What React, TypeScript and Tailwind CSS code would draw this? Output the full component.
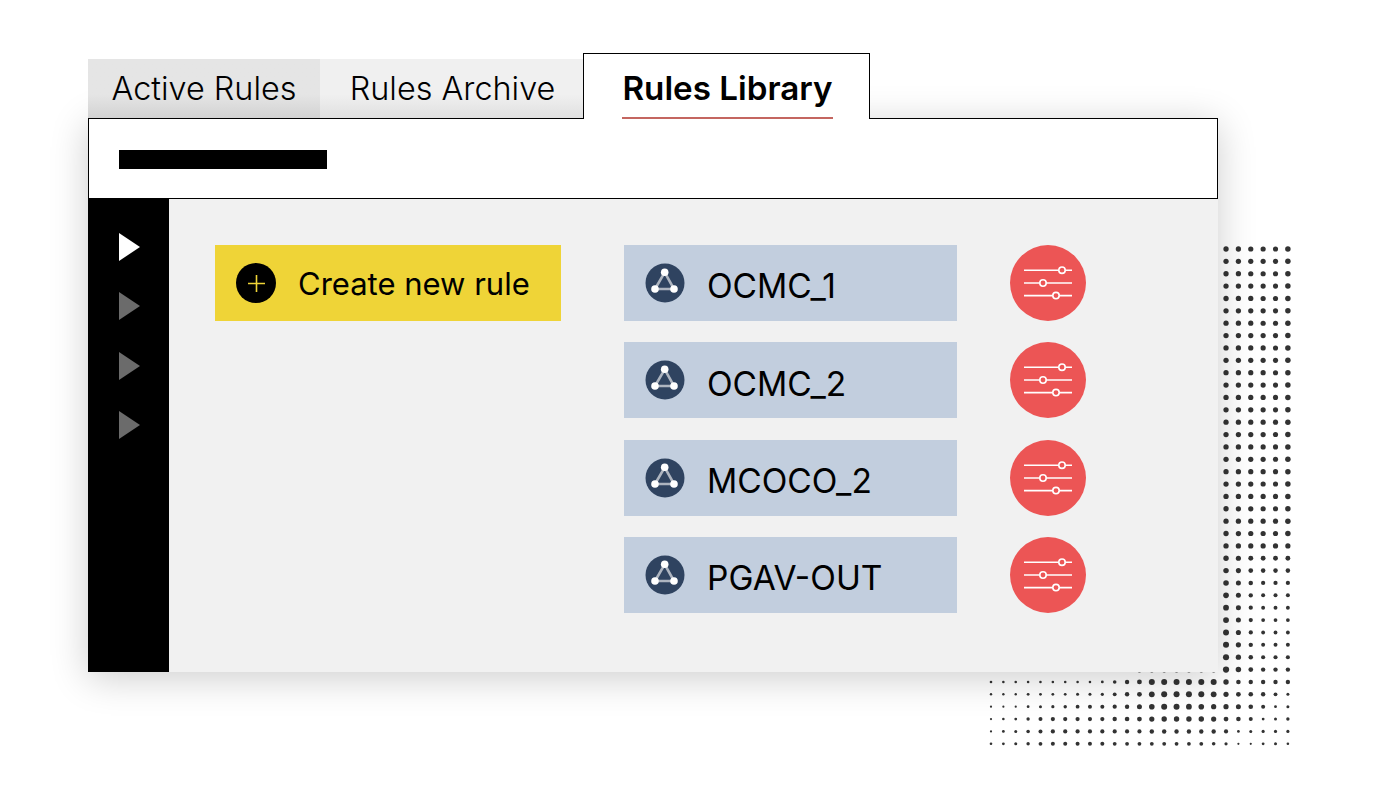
import { useMemo } from "react";

const rules = ["OCMC_1", "OCMC_2", "MCOCO_2", "PGAV-OUT"];

const PITCH = 12.37;

// radius of the six bottom rows, read off the picture
const bottomRows = [
  [1.3, 1.3, 1.3, 1.3, 1.3, 1.3, 1.3, 1.3, 1.3, 1.4, 1.8, 2.2, 2.4, 3, 3, 3, 3, 3, 3, 2.7, 2.3, 2.2, 2.2, 2.2, 2.2],
  [1.2, 1.2, 1.2, 1.4, 1.4, 1.4, 1.4, 1.5, 1.5, 1.6, 1.9, 2.2, 2.4, 2.9, 3, 3, 3, 3, 2.9, 2.6, 2.4, 2.3, 2.2, 1.9, 1.5],
  [1.1, 1.1, 1.1, 1.4, 1.5, 1.6, 1.7, 1.9, 2, 2, 2.1, 2.2, 2.5, 2.8, 3, 3, 2.9, 2.8, 2.6, 2.6, 2.5, 2.3, 2, 1.4, 1.5],
  [1.1, 1.3, 1.4, 1.7, 2, 2.1, 2.1, 2.1, 2.1, 2.1, 2.2, 2.3, 2.4, 2.6, 2.7, 2.7, 2.7, 2.7, 2.6, 2.4, 2.3, 2, 1.4, 1.5, 1.7],
  [1.1, 1.4, 1.5, 1.8, 2, 2.1, 2.1, 2.1, 2.1, 2.1, 2.1, 2.1, 2.1, 2.2, 2.2, 2.2, 2.2, 2.2, 2.2, 2.1, 1.4, 1.5, 1.6, 1.6, 1.6],
  [1.3, 1.4, 1.5, 1.7, 1.9, 2, 2, 2, 2, 2, 1.9, 1.9, 1.9, 1.9, 1.9, 1.9, 1.9, 1.9, 1.8, 1.6, 1.1, 1.1, 1.4, 1.5, 1.3],
];

// right six columns above the bottom rows, smooth fade towards the lower left
function sideRadius(col: number, row: number) {
  const c = col - 19;
  const top = 2.65 - c * 0.02 + (c === 5 ? 0.2 : 0);
  if (row < 24) return top;
  const t = (row - 24) / 10;
  const left = 2.65 + t * 0.45;
  const right = 2.6 - Math.sin(t * Math.PI * 0.8) * 0.7;
  return left + (right - left) * Math.min(1, c / 2.5);
}

function DotField() {
  const dots = useMemo(() => {
    const out: { x: number; y: number; r: number }[] = [];
    for (let row = 0; row < 35; row++) {
      for (let col = 19; col < 25; col++) {
        out.push({ x: col * PITCH, y: row * PITCH, r: sideRadius(col, row) });
      }
    }
    // row that only just peeks out under the panel
    for (let col = 12; col < 19; col++) {
      out.push({ x: col * PITCH, y: 34 * PITCH, r: 2.8 });
    }
    bottomRows.forEach((radii, i) => {
      radii.forEach((r, col) => {
        out.push({ x: col * PITCH, y: (35 + i) * PITCH, r });
      });
    });
    return out;
  }, []);

  return (
    <svg className="absolute left-[991px] top-[249px] overflow-visible" width="298" height="496">
      {dots.map((d) => (
        <circle key={`${d.x}-${d.y}`} cx={d.x} cy={d.y} r={d.r} fill="#333333" />
      ))}
    </svg>
  );
}

function Triangle({ className }: { className: string }) {
  return (
    <svg width="21" height="28" viewBox="0 0 21 28" className={className}>
      <path d="M0 0L21 14L0 28Z" fill="currentColor" />
    </svg>
  );
}

function RuleIcon() {
  return (
    <svg width="40" height="40" viewBox="0 0 40 40" className="shrink-0">
      <circle cx="20" cy="20" r="19.5" fill="#2f4360" />
      <path d="M19.7 9.3L10 26H29Z" fill="none" stroke="#aeb5c0" strokeWidth="2.6" />
      <circle cx="19.7" cy="9.3" r="3.8" fill="#fff" />
      <circle cx="10" cy="26" r="3.8" fill="#fff" />
      <circle cx="29" cy="26" r="3.8" fill="#fff" />
    </svg>
  );
}

function SettingsButton() {
  const knobs = [
    { x: 38, y: 2.2 },
    { x: 19, y: 15 },
    { x: 32, y: 27.6 },
  ];
  return (
    <div className="w-[76px] h-[76px] rounded-full bg-[#ec5555] flex items-center justify-center">
      <svg width="48" height="30" viewBox="0 0 48 30" className="overflow-visible">
        {knobs.map((k) => (
          <g key={k.y}>
            <line x1="0" x2="48" y1={k.y} y2={k.y} stroke="#fff" strokeWidth="1.6" />
            <circle cx={k.x} cy={k.y} r="3.2" fill="#ec5555" stroke="#fff" strokeWidth="1.6" />
          </g>
        ))}
      </svg>
    </div>
  );
}

export default function App() {
  return (
    <div className="relative w-[1380px] h-[800px] bg-white overflow-hidden pl-[88px] pt-[53px] font-['Inter',sans-serif] text-black">
      <DotField />
      <div className="relative w-[1130px]">
        {/* tabs */}
        <div className="flex items-end h-[65px] text-[32.4px] font-light">
          <div className="w-[232px] h-[59px] pt-[2px] flex items-center justify-center bg-gradient-to-b from-[#e5e5e5] from-60% to-[#d2d2d2]">
            Active Rules
          </div>
          <div className="w-[263px] h-[59px] pt-[2px] pl-[2px] flex items-center justify-center bg-gradient-to-b from-[#f0f0f0] from-60% to-[#e0e0e0]">
            Rules Archive
          </div>
          <div className="relative z-10 -mb-px w-[287px] h-[66px] bg-white border border-b-0 border-black flex justify-center pt-[12px] pl-[2px] text-[33.2px] font-semibold">
            <span className="leading-[44px] h-[53px] border-b-2 border-[#c46660]">Rules Library</span>
          </div>
        </div>

        {/* panel */}
        <div className="shadow-[0_6px_36px_rgba(0,0,0,0.2)]">
          <div className="h-[81px] bg-white border border-black flex items-center pl-[30px] pt-[2px]">
            <div className="w-[208px] h-[19px] bg-black" />
          </div>
          <div className="flex h-[473px] bg-[#f1f1f1]">
            <div className="w-[81px] bg-black flex flex-col items-start pl-[31px] pt-[34px] gap-[31.3px]">
              <Triangle className="text-white" />
              <Triangle className="text-[#6b6b6b]" />
              <Triangle className="text-[#6b6b6b]" />
              <Triangle className="text-[#6b6b6b]" />
            </div>
            <div className="flex items-start pl-[46px] pt-[46px]">
              <div className="w-[346px] h-[76px] bg-[#efd437] flex items-center pl-[21px] gap-[22px] text-[31px]">
                <div className="w-10 h-10 rounded-full bg-black flex items-center justify-center">
                  <svg width="17" height="17" viewBox="0 0 17 17">
                    <path d="M8.5 0V17M0 8.5H17" stroke="#efd437" strokeWidth="1.6" />
                  </svg>
                </div>
                <span className="pt-[2px]">Create new rule</span>
              </div>
              <div className="ml-[63px] flex flex-col gap-[21.3px]">
                {rules.map((name) => (
                  <div key={name} className="flex items-center gap-[53px]">
                    <div className="w-[333px] h-[76px] bg-[#c2cede] flex items-center pl-[21px] gap-[22px] text-[33.5px]">
                      <RuleIcon />
                      <span className="pt-[7px]">{name}</span>
                    </div>
                    <SettingsButton />
                  </div>
                ))}
              </div>
            </div>
          </div>
        </div>
      </div>
    </div>
  );
}
